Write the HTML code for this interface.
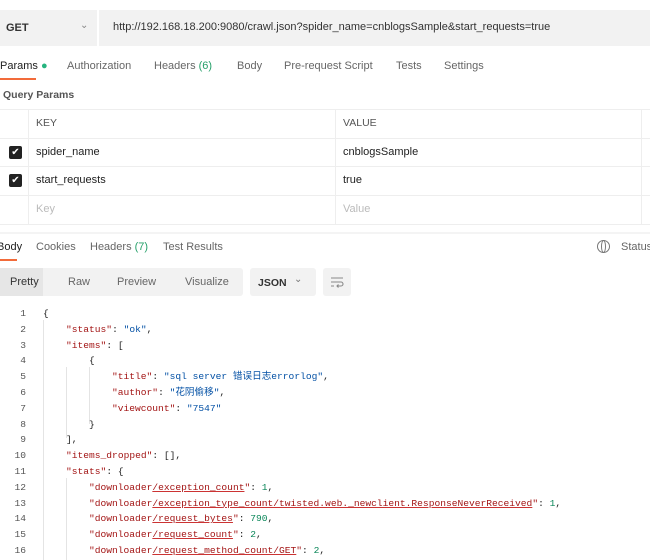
<!DOCTYPE html>
<html><head><meta charset="utf-8"><style>
*{margin:0;padding:0;box-sizing:border-box}
body{width:650px;height:560px;background:#fff;font-family:"Liberation Sans","Noto Sans CJK SC",sans-serif;font-size:11.5px;color:#212121;position:relative;overflow:hidden}
.a{position:absolute;white-space:nowrap}
.g{color:#888}
.code{font-family:"Liberation Mono","Noto Sans CJK SC",monospace;font-size:9.6px}
.ln{position:absolute;width:26px;text-align:right;color:#555;font-family:"Liberation Mono",monospace;font-size:9.6px}
.k{color:#a31515}.s{color:#0451a5}.n{color:#098658}
.u{text-decoration:underline;text-decoration-color:#c33}
</style></head><body>
<div class="a" style="left:0;top:10px;width:650px;height:36px;background:#f2f2f2"></div>
<div class="a" style="left:97px;top:10px;width:2px;height:36px;background:#fff"></div>
<div class="a" style="left:6px;top:22px;font-weight:bold;font-size:11px;color:#333">GET</div>
<div class="a" style="left:80px;top:20px;color:#888;font-size:10px">&#8964;</div>
<div class="a" style="left:113px;top:21px;font-size:11px;color:#333">http://192.168.18.200:9080/crawl.json?spider_name=cnblogsSample&amp;start_requests=true</div>

<div class="a" style="top:60px;left:0;font-size:11px">Params <span style="color:#26b47f">●</span></div>
<div class="a" style="left:0;top:78px;width:36px;height:2px;background:#f26b3a"></div>
<div class="a g" style="top:60px;left:67px;font-size:11px;color:#666">Authorization</div>
<div class="a g" style="top:60px;left:154px;font-size:11px;color:#666">Headers <span style="color:#26a06a">(6)</span></div>
<div class="a g" style="top:60px;left:237px;font-size:11px;color:#666">Body</div>
<div class="a g" style="top:60px;left:284px;font-size:11px;color:#666">Pre-request Script</div>
<div class="a g" style="top:60px;left:396px;font-size:11px;color:#666">Tests</div>
<div class="a g" style="top:60px;left:444px;font-size:11px;color:#666">Settings</div>
<div class="a" style="top:89px;left:3px;font-size:10.5px;font-weight:bold;color:#555">Query Params</div>

<div class="a" style="left:0;top:109px;width:650px;height:1px;background:#eee"></div>
<div class="a" style="left:0;top:138px;width:650px;height:1px;background:#eee"></div>
<div class="a" style="left:0;top:166px;width:650px;height:1px;background:#eee"></div>
<div class="a" style="left:0;top:195px;width:650px;height:1px;background:#eee"></div>
<div class="a" style="left:0;top:224px;width:650px;height:1px;background:#eee"></div>
<div class="a" style="left:28px;top:109px;width:1px;height:115px;background:#eee"></div>
<div class="a" style="left:335px;top:109px;width:1px;height:115px;background:#eee"></div>
<div class="a" style="left:641px;top:109px;width:1px;height:115px;background:#eee"></div>
<div class="a" style="top:117px;left:36px;font-size:10.5px;color:#555">KEY</div>
<div class="a" style="top:117px;left:343px;font-size:10.5px;color:#555">VALUE</div>
<div class="a" style="left:9px;top:146px;width:13px;height:13px;background:#222;border-radius:2px;color:#fff;font-size:10px;line-height:13px;text-align:center">✔</div>
<div class="a" style="left:9px;top:174px;width:13px;height:13px;background:#222;border-radius:2px;color:#fff;font-size:10px;line-height:13px;text-align:center">✔</div>
<div class="a" style="top:146px;left:36px;font-size:11px">spider_name</div>
<div class="a" style="top:146px;left:343px;font-size:11px">cnblogsSample</div>
<div class="a" style="top:174px;left:36px;font-size:11px">start_requests</div>
<div class="a" style="top:174px;left:343px;font-size:11px">true</div>
<div class="a" style="top:203px;left:36px;font-size:11px;color:#bbb">Key</div>
<div class="a" style="top:203px;left:343px;font-size:11px;color:#bbb">Value</div>

<div class="a" style="left:0;top:232px;width:650px;height:2px;background:#f4f4f4"></div>
<div class="a" style="top:241px;left:-3px;font-size:11px">Body</div>
<div class="a" style="left:0;top:259px;width:17px;height:2px;background:#f26b3a"></div>
<div class="a" style="top:241px;left:36px;font-size:11px;color:#666">Cookies</div>
<div class="a" style="top:241px;left:90px;font-size:11px;color:#666">Headers <span style="color:#26a06a">(7)</span></div>
<div class="a" style="top:241px;left:163px;font-size:11px;color:#666">Test Results</div>
<div class="a" style="left:597px;top:240px;width:13px;height:13px;border:1.3px solid #777;border-radius:50%"></div>
<div class="a" style="left:601px;top:240px;width:5px;height:13px;border:1.2px solid #777;border-radius:50%"></div>
<div class="a" style="top:241px;left:621px;font-size:11px;color:#666">Status</div>

<div class="a" style="left:0;top:268px;width:243px;height:28px;background:#f2f2f2;border-radius:3px"></div>
<div class="a" style="left:0;top:268px;width:43px;height:28px;background:#e6e6e6"></div>
<div class="a" style="top:276px;left:10px;font-size:11px;color:#333">Pretty</div>
<div class="a" style="top:276px;left:68px;font-size:11px;color:#666">Raw</div>
<div class="a" style="top:276px;left:117px;font-size:11px;color:#666">Preview</div>
<div class="a" style="top:276px;left:185px;font-size:11px;color:#666">Visualize</div>
<div class="a" style="left:250px;top:268px;width:66px;height:28px;background:#f2f2f2;border-radius:3px"></div>
<div class="a" style="top:277px;left:258px;font-size:10.5px;font-weight:bold;color:#333">JSON</div>
<div class="a" style="top:274px;left:294px;font-size:10px;color:#777">&#8964;</div>
<div class="a" style="left:323px;top:268px;width:28px;height:28px;background:#f2f2f2;border-radius:3px"></div>
<svg class="a" style="left:329px;top:274px" width="16" height="16" viewBox="0 0 16 16" fill="none" stroke="#888" stroke-width="1.1"><path d="M2 4h12M2 8h10a2 2 0 0 1 0 4H8M9.5 10.5 8 12l1.5 1.5M2 12h3"/></svg>

<div class="a" style="left:43px;top:320px;width:1px;height:240px;background:#e4e4e4"></div>
<div class="a" style="left:66px;top:367px;width:1px;height:71px;background:#e4e4e4"></div>
<div class="a" style="left:89px;top:367px;width:1px;height:57px;background:#e4e4e4"></div>
<div class="a" style="left:66px;top:478px;width:1px;height:82px;background:#e4e4e4"></div>

<div class="a code" style="left:0;top:306px;line-height:15.8px;width:650px">
<div style="position:relative;height:253px">
<div class="ln" style="top:0">1</div><div class="ln" style="top:15.8px">2</div><div class="ln" style="top:31.6px">3</div><div class="ln" style="top:47.4px">4</div><div class="ln" style="top:63.2px">5</div><div class="ln" style="top:79px">6</div><div class="ln" style="top:94.8px">7</div><div class="ln" style="top:110.6px">8</div><div class="ln" style="top:126.4px">9</div><div class="ln" style="top:142.2px">10</div><div class="ln" style="top:158px">11</div><div class="ln" style="top:173.8px">12</div><div class="ln" style="top:189.6px">13</div><div class="ln" style="top:205.4px">14</div><div class="ln" style="top:221.2px">15</div><div class="ln" style="top:237px">16</div>
<div class="a" style="left:43px;top:0">{</div>
<div class="a" style="left:66px;top:15.8px"><span class="k">"status"</span>: <span class="s">"ok"</span>,</div>
<div class="a" style="left:66px;top:31.6px"><span class="k">"items"</span>: [</div>
<div class="a" style="left:89px;top:47.4px">{</div>
<div class="a" style="left:112px;top:63.2px"><span class="k">"title"</span>: <span class="s">"sql server  错误日志errorlog"</span>,</div>
<div class="a" style="left:112px;top:79px"><span class="k">"author"</span>: <span class="s">"花阴偷移"</span>,</div>
<div class="a" style="left:112px;top:94.8px"><span class="k">"viewcount"</span>: <span class="s">"7547"</span></div>
<div class="a" style="left:89px;top:110.6px">}</div>
<div class="a" style="left:66px;top:126.4px">],</div>
<div class="a" style="left:66px;top:142.2px"><span class="k">"items_dropped"</span>: [],</div>
<div class="a" style="left:66px;top:158px"><span class="k">"stats"</span>: {</div>
<div class="a" style="left:89px;top:173.8px"><span class="k">"downloader<span class="u">/exception_count</span>"</span>: <span class="n">1</span>,</div>
<div class="a" style="left:89px;top:189.6px"><span class="k">"downloader<span class="u">/exception_type_count/twisted.web._newclient.ResponseNeverReceived</span>"</span>: <span class="n">1</span>,</div>
<div class="a" style="left:89px;top:205.4px"><span class="k">"downloader<span class="u">/request_bytes</span>"</span>: <span class="n">790</span>,</div>
<div class="a" style="left:89px;top:221.2px"><span class="k">"downloader<span class="u">/request_count</span>"</span>: <span class="n">2</span>,</div>
<div class="a" style="left:89px;top:237px"><span class="k">"downloader<span class="u">/request_method_count/GET</span>"</span>: <span class="n">2</span>,</div>
</div></div>
</body></html>
